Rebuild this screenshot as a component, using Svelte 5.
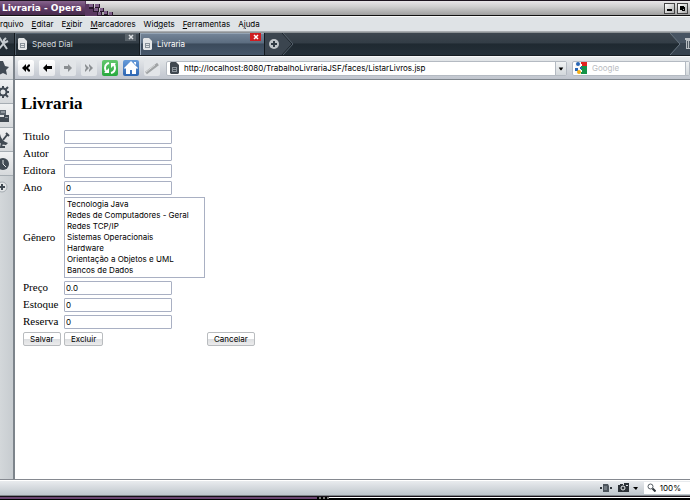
<script lang="ts">
    const menus = [
        ["", "", "rquivo"],
        ["", "E", "ditar"],
        ["E", "x", "ibir"],
        ["", "M", "arcadores"],
        ["Wid", "g", "ets"],
        ["", "F", "erramentas"],
        ["A", "j", "uda"],
    ];

    const genres = [
        "Tecnologia Java",
        "Redes de Computadores - Geral",
        "Redes TCP/IP",
        "Sistemas Operacionais",
        "Hardware",
        "Orientação a Objetos e UML",
        "Bancos de Dados",
    ];

    let url = $state("http://localhost:8080/TrabalhoLivrariaJSF/faces/ListarLivros.jsp");
    let search = $state("");
    let active = $state(1);
    let tabs = $state(["Speed Dial", "Livraria"]);

    let book = $state({
        titulo: "",
        autor: "",
        editora: "",
        ano: "0",
        genero: [] as string[],
        preco: "0.0",
        estoque: "0",
        reserva: "0",
    });
</script>

{#snippet page()}
    <svg class="page-icon" viewBox="0 0 9 12" aria-hidden="true">
        <path class="sheet" d="M1 0h5l3 3v8l-1 1H1l-1-1V1z" />
        <path class="ink" d="M2 5h5v5H2z" />
        <path class="hole" d="M3 6h3v1H3zM3 8h3v1H3z" />
    </svg>
{/snippet}

{#snippet field(id: string, label: string, key: "titulo" | "autor" | "editora" | "ano" | "preco" | "estoque" | "reserva")}
    <tr>
        <td><label for={id}>{label}</label></td>
        <td><input class="text" type="text" {id} bind:value={book[key]} /></td>
        <td></td>
    </tr>
{/snippet}

<div class="window">
    <header class="title-bar">
        <div class="title">Livraria - Opera</div>
        <svg class="pixels" viewBox="0 0 28 15" aria-hidden="true">
            <path fill="#5a3760" d="M0 0h1v3h3v4h4v4h4v4H0z" />
            <path fill="#29182d" d="M4 3h5v5H4zM10 3h5v4h-5zM8 7h6v4H8zM15 7h4v4h-4zM12 11h5v4h-5zM19 10h4v4h-4zM24 11h4v4h-4z" />
            <path fill="#80608a" d="M4 3h4v3H4zM10 3h4v3h-4zM9 7h4v3H9zM15 7h3v3h-3zM13 11h3v3h-3zM19 10h3v3h-3zM24 11h3v3h-3z" />
        </svg>
        <div class="window-buttons">
            <button aria-label="Minimizar">
                <svg viewBox="0 0 9 9"><path d="M2 5h5v2H2z" /></svg>
            </button>
            <button aria-label="Restaurar">
                <svg viewBox="0 0 9 9"><path d="M2 2h4v1h1v4H4V6H2z" /><path fill="#aaa" d="M5 5h1v1H5z" /></svg>
            </button>
            <button aria-label="Fechar">
                <svg viewBox="0 0 9 9"><path d="M2 2l5 5M7 2L2 7" stroke="#000" /></svg>
            </button>
        </div>
    </header>

    <nav class="menu">
        {#each menus as [before, key, after]}
            <button>{before}<u>{key}</u>{after}</button>
        {/each}
    </nav>

    <div class="tab-bar">
        <button class="panel-toggle" aria-label="Painéis">
            <svg viewBox="0 0 14 22">
                <path d="M-1 4L7 16M4 10L-2 17" stroke="#c5cbd0" stroke-width="2" fill="none" />
                <path d="M4 10V7l2-2M4 10l4-2" stroke="#c5cbd0" stroke-width="2" fill="none" />
            </svg>
        </button>
        {#each tabs as tab, i}
            <div class="tab" class:active={active === i}>
                <button class="tab-label" onclick={() => (active = i)}>{@render page()}{tab}</button>
                <button class="tab-close" aria-label="Fechar aba">
                    <svg viewBox="0 0 11 8"><path d="M4 2l4 4M8 2L4 6" stroke="currentColor" stroke-width="1.5" /></svg>
                </button>
            </div>
        {/each}
        <button class="new-tab" aria-label="Nova aba">
            <svg viewBox="0 0 28 22">
                <path d="M0 0h17l10 11-10 11H0z" fill="#3b454f" />
                <path d="M17 0l10 11-10 11" stroke="#1a2229" fill="none" />
                <path d="M18 0l10 11-10 11" stroke="#55616c" fill="none" />
                <circle cx="9" cy="11" r="5" fill="#c0c5c9" />
                <path d="M9 8v6M6 11h6" stroke="#303a43" stroke-width="2" />
            </svg>
        </button>
        <button class="trash" aria-label="Abas fechadas">
            <svg viewBox="0 0 20 22">
                <path d="M0 0h20v22H0l10-11z" fill="#37434f" />
                <path d="M0 0h20v10H9z" fill="#475462" />
                <path d="M0 0l10 11L0 22" stroke="#697682" fill="none" />
                <path d="M15 5h5v2h-5zM16 7h4v9h-4z" fill="#b9bfc4" />
                <path d="M17.500 8v7M19.500 8v7" stroke="#4e5963" />
            </svg>
        </button>
    </div>

    <div class="body">
        <aside class="panels">
            <button aria-label="Favoritos">
                <svg viewBox="-1 0 14 24">
                    <path d="M2 5l2 5 4 1-3 3 1 5-4-2-4 2V5z" fill="#414a53" />
                </svg>
            </button>
            <button aria-label="Widgets">
                <svg viewBox="-1 0 14 24">
                    <circle cx="2" cy="12" r="3.500" fill="none" stroke="#414a53" stroke-width="2" />
                    <path d="M2 6v3M2 15v3M5 12h3M4 10l3-3M4 14l3 3M0 10l-3-3M0 14l-3 3" stroke="#414a53" stroke-width="2" />
                </svg>
            </button>
            <button aria-label="Unite">
                <svg viewBox="-1 0 14 24">
                    <path d="M-1 6h6v5h-6z" fill="#5b646d" />
                    <path d="M0 7h4v2H0z" fill="#8d959c" />
                    <path d="M3 11h5v7H-1v-5h4z" fill="#414a53" />
                    <path d="M4 13h3v1H4z" fill="#8d959c" />
                </svg>
            </button>
            <button aria-label="Transferências">
                <svg viewBox="-1 0 14 24">
                    <path d="M-1 6q1 7 8 9l-2 2q-6 0-8-5z" fill="#414a53" />
                    <path d="M2 12l4-5M5 5l3 3M1 15l-1 4h4" stroke="#414a53" stroke-width="2" fill="none" />
                </svg>
            </button>
            <button aria-label="Histórico">
                <svg viewBox="-1 0 14 24">
                    <circle cx="2" cy="12" r="6" fill="#414a53" />
                    <path d="M2 8v4l3 3" stroke="#e4e7e9" stroke-width="1" fill="none" />
                </svg>
            </button>
            <button class="add" aria-label="Adicionar painel">
                <svg viewBox="-1 0 14 24">
                    <circle cx="1" cy="11" r="5" fill="#e3e6e8" stroke="#a4abb1" />
                    <path d="M1 8v6M-2 11h6" stroke="#414a53" stroke-width="2" />
                </svg>
            </button>
        </aside>

        <div class="main">
            <div class="toolbar">
                <button aria-label="Rebobinar">
                    <svg viewBox="0 0 16 16"><path d="M8 4v3l3-3v2L9 8l2 2v2L8 9v3L4 8zM12 4v2l-2 2 2 2v2L8 8z" /></svg>
                </button>
                <button aria-label="Voltar">
                    <svg viewBox="0 0 16 16"><path d="M8 4v2h5v3H8v3L4 8z" /></svg>
                </button>
                <button aria-label="Avançar" disabled>
                    <svg viewBox="0 0 16 16"><path d="M8 4v2H4v3h4v3l4-4z" /></svg>
                </button>
                <button aria-label="Avanço rápido" disabled>
                    <svg viewBox="0 0 16 16"><path d="M4 4l4 4-4 4v-2l1-2-1-2zM8 4l4 4-4 4v-2l1-2-1-2z" /></svg>
                </button>
                <button class="reload" aria-label="Recarregar">
                    <svg viewBox="0 0 16 16">
                        <path d="M7 3Q3 4 3 8q0 3 2 4M9 13q4-1 4-5 0-3-2-4" stroke="#fff" stroke-width="2" fill="none" />
                        <path d="M2 13h5V8zM14 3H9v5z" fill="#fff" />
                    </svg>
                </button>
                <button class="home" aria-label="Início">
                    <svg viewBox="0 0 16 16">
                        <path d="M8 1l7 7-1 1-1-1v6H9v-4H7v4H3V8L2 9 1 8z" fill="#fff" />
                        <path d="M11 2h2v3l-2-2z" fill="#fff" />
                    </svg>
                </button>
                <button class="wand" aria-label="Varinha">
                    <svg viewBox="0 0 16 16"><path d="M2 13L14 4" stroke="#a1a4a6" stroke-width="3" /><path d="M2 12L11 5" stroke="#d9dbdc" /></svg>
                </button>
                <div class="address">
                    {@render page()}
                    <input type="text" aria-label="Endereço" bind:value={url} />
                    <button class="drop" aria-label="Histórico de endereços">
                        <svg viewBox="0 0 11 15"><path d="M3 6h5L6 9H5z" /></svg>
                    </button>
                </div>
                <div class="search">
                    <svg class="google" viewBox="0 0 12 12" aria-hidden="true">
                        <path fill="#f7f8f8" d="M0 0h12v12H0z" />
                        <path fill="#e32320" d="M6 0h6v4H6z" />
                        <path fill="#159448" d="M6 4h6v8H6z" />
                        <path fill="#fff" d="M5 2h2v2H5zM5 8h2v2H5z" />
                        <circle cx="3" cy="2" r="2" fill="#2865b4" />
                        <path fill="#2865b4" d="M0 6h3v3H0zM5 5h2v2H5z" />
                        <circle cx="4" cy="10" r="2" fill="#f4ad15" />
                    </svg>
                    <input type="text" aria-label="Pesquisar" placeholder="Google" bind:value={search} />
                    <button class="drop" aria-label="Motores de busca"></button>
                </div>
            </div>

            <main>
                <h1>Livraria</h1>
                <form onsubmit={(e) => e.preventDefault()}>
                    <table>
                        <tbody>
                            {@render field("titulo", "Titulo", "titulo")}
                            {@render field("autor", "Autor", "autor")}
                            {@render field("editora", "Editora", "editora")}
                            {@render field("ano", "Ano", "ano")}
                            <tr>
                                <td><label for="genero">Gênero</label></td>
                                <td>
                                    <select id="genero" multiple size="7" bind:value={book.genero}>
                                        {#each genres as genre}
                                            <option>{genre}</option>
                                        {/each}
                                    </select>
                                </td>
                                <td></td>
                            </tr>
                            {@render field("preco", "Preço", "preco")}
                            {@render field("estoque", "Estoque", "estoque")}
                            {@render field("reserva", "Reserva", "reserva")}
                            <tr>
                                <td><button class="push">Salvar</button></td>
                                <td><button class="push">Excluir</button></td>
                                <td><button class="push">Cancelar</button></td>
                            </tr>
                        </tbody>
                    </table>
                </form>
            </main>
        </div>
    </div>

    <footer class="status">
        <button aria-label="Ajustar à largura">
            <svg width="12" height="10" viewBox="0 0 12 10">
                <path d="M3 1h5l1 2v6H3z" fill="#4c545c" />
                <path d="M0 4h2v2H0zM10 4h2v2h-2z" fill="#30363c" />
                <path d="M4 4h3M4 6h3" stroke="#99a1a8" />
            </svg>
        </button>
        <button aria-label="Imagens">
            <svg width="20" height="10" viewBox="0 0 20 10">
                <path d="M0 2h2V1h3v1h1V0h5v9H0z" fill="#2c3137" />
                <circle cx="5" cy="5" r="2" fill="none" stroke="#e8eaec" />
                <path d="M8 2h2v1H8z" fill="#dfe2e5" />
                <path d="M15 4h5l-2 3z" />
            </svg>
        </button>
        <button class="zoom">
            <svg width="9" height="9" viewBox="0 0 9 9">
                <circle cx="3.500" cy="3.500" r="2.500" fill="none" stroke="#555d64" />
                <path d="M5.500 5.500l3 3" stroke="#30363c" stroke-width="2" />
            </svg>
            100%
        </button>
    </footer>
    <div class="frame"><span></span><i></i></div>
</div>

<style>
    :global(body) {
        margin: 0;
    }

    .window {
        display: flex;
        flex-direction: column;
        min-height: 100vh;
        overflow: hidden;
        font: 8px/10px Inter, "Liberation Sans", sans-serif;
        color: #000;
    }

    button,
    input,
    select {
        margin: 0;
        padding: 0;
        border: 0;
        border-radius: 0;
        box-sizing: border-box;
        background: none;
        font: inherit;
        color: inherit;
        outline: none;
    }

    svg {
        display: block;
    }

    .title-bar {
        display: flex;
        height: 16px;
        box-sizing: border-box;
        border-top: 1px solid #1c141e;
        border-bottom: 1px solid #111;
        background: linear-gradient(#e8e6e8, #cfcfcf 40%, #9f9f9f);
    }

    .title {
        padding: 0 3px 0 2px;
        background: linear-gradient(#87648d, #5f3b66 50%, #472a4c);
        color: #fff;
        font: bold 9px/14px "DejaVu Sans", sans-serif;
        white-space: nowrap;
    }

    .pixels {
        width: 28px;
        height: 15px;
    }

    .window-buttons {
        display: flex;
        gap: 2px;
        margin: 2px -11px 0 auto;
    }

    .window-buttons button {
        width: 11px;
        height: 11px;
        border: 1px solid #444;
        background: linear-gradient(135deg, #fff, #aaa);
    }

    .menu {
        display: flex;
        gap: 8px;
        height: 16px;
        box-sizing: border-box;
        border-top: 1px solid #f9fafa;
        border-bottom: 1px solid #a9adb1;
        background: #dfe3e6;
    }

    .tab-bar {
        display: flex;
        height: 24px;
        box-sizing: border-box;
        border-top: 1px solid #8d9296;
        border-bottom: 1px solid #151c22;
        background: linear-gradient(#3d464f, #333d46 45%, #1f2931 50%, #242f38);
    }

    .panel-toggle {
        flex: none;
        width: 15px;
        border-right: 1px solid #12181d;
    }

    .tab {
        position: relative;
        flex: 0 1 125px;
        box-sizing: border-box;
        border-right: 1px solid #131a20;
        box-shadow: inset 1px 1px #53606c;
        color: #d5dade;
    }

    .tab.active {
        background: linear-gradient(#75869a, #5c6d80 45%, #3b4a5b 50%, #46576a);
        box-shadow: inset 1px 1px #94a4b5;
        color: #fff;
    }

    .tab-label {
        display: flex;
        align-items: center;
        gap: 5px;
        width: 100%;
        height: 100%;
        padding-left: 3px;
    }

    .page-icon {
        flex: none;
        width: 9px;
        height: 12px;
    }

    .sheet {
        fill: #e3e5e7;
    }

    .ink {
        fill: #89929a;
    }

    .hole {
        fill: #e3e5e7;
    }

    .tab-close {
        position: absolute;
        top: 0;
        right: 3px;
        width: 11px;
        height: 8px;
        background: #59626a;
        color: #dde0e3;
    }

    .active .tab-close {
        background: #cf1c20;
        color: #fff;
    }

    .tab-close svg {
        width: 11px;
        height: 8px;
    }

    .new-tab {
        width: 28px;
    }

    .trash {
        width: 20px;
        margin-left: auto;
    }

    .body {
        display: flex;
        flex: 1;
    }

    .panels {
        width: 13px;
        flex: none;
        border-right: 2px solid #7d848b;
        background: linear-gradient(90deg, #d3d7da, #c7ccd0);
    }

    .panels button {
        display: block;
        width: 13px;
        height: 24px;
        border-bottom: 1px solid #a6adb3;
        background: linear-gradient(#f1f2f3, #d6d9dc);
        overflow: hidden;
    }

    .panels .add {
        border: 0;
        background: none;
    }

    .panels svg {
        width: 14px;
        height: 24px;
    }

    .main {
        display: flex;
        flex: 1;
        flex-direction: column;
        min-width: 0;
        background: #fff;
    }

    .toolbar {
        display: flex;
        align-items: center;
        gap: 5px;
        height: 24px;
        box-sizing: border-box;
        padding-left: 3px;
        border-top: 1px solid #f8f9fa;
        border-bottom: 1px solid #7f868d;
        background: linear-gradient(#e7eaec, #c0c5ce);
    }

    .toolbar > button {
        flex: none;
        width: 16px;
        height: 16px;
        border-radius: 2px;
        background: linear-gradient(#fff, #e6e8eb);
    }

    .toolbar > button:disabled {
        background: #e2e5e8;
        fill: #8b8f92;
    }

    .toolbar > .reload {
        background: linear-gradient(#63c76e, #27a93d);
    }

    .toolbar > .home {
        background: linear-gradient(#679bd9, #2c65b2);
    }

    .toolbar > .wand {
        background: #e2e5e8;
    }

    .address,
    .search {
        display: flex;
        align-items: center;
        gap: 5px;
        height: 15px;
        box-sizing: border-box;
        border: 1px solid #b4bac2;
        border-radius: 2px;
        background: #fff;
    }

    .address {
        flex: 1;
        padding-left: 3px;
        margin-left: 1px;
    }

    .search {
        width: 118px;
        padding-left: 2px;
    }

    .address .sheet {
        fill: #404850;
    }

    .address .ink {
        fill: #8c949b;
    }

    .address .hole {
        fill: #404850;
    }

    .address input,
    .search input {
        flex: 1;
        min-width: 0;
        height: 13px;
    }

    .search input::placeholder {
        color: #b9bcbf;
        opacity: 1;
    }

    .google {
        flex: none;
        width: 12px;
        height: 12px;
    }

    .drop {
        flex: none;
        width: 11px;
        height: 13px;
        border-left: 1px solid #b4bac2;
        background: linear-gradient(#f1f3f4, #d3d8dc);
    }

    .search .drop {
        width: 4px;
    }

    main {
        padding: 14px 6px;
        font: 11px/15px "Liberation Serif", serif;
    }

    h1 {
        margin: 0 0 13px;
        font-size: 17px;
        line-height: 20px;
    }

    table {
        border-spacing: 2px;
    }

    td {
        height: 15px;
        padding: 0;
        vertical-align: middle;
    }

    td:first-child {
        min-width: 39px;
    }

    label {
        display: block;
    }

    .text {
        display: block;
        width: 108px;
        height: 14px;
        padding: 0 1px;
        border: 1px solid #a9b0c3;
        border-radius: 1px;
        background: #fff;
        font: 8px/10px Inter, "Liberation Sans", sans-serif;
    }

    select {
        display: block;
        width: 141px;
        height: 81px;
        padding: 1px 0;
        border: 1px solid #a9b0c3;
        font: 8px/10px Inter, "Liberation Sans", sans-serif;
        overflow: hidden;
    }

    option {
        min-height: 11px;
        padding: 0 2px;
        line-height: 11px;
    }

    .push {
        display: block;
        height: 14px;
        padding: 0 6px;
        border: 1px solid #b9bcbf;
        border-radius: 2px;
        background: linear-gradient(#fff 50%, #dcdee0 50%, #ececed);
        font: 8px/10px Inter, "Liberation Sans", sans-serif;
    }

    .status {
        display: flex;
        align-items: center;
        justify-content: flex-end;
        gap: 6px;
        height: 17px;
        box-sizing: border-box;
        border-top: 1px solid #858990;
        border-bottom: 1px solid #81868b;
        box-shadow: inset 0 1px #fff;
        background: linear-gradient(#eceef1, #bfc6cc);
    }

    .status .zoom {
        display: flex;
        align-items: center;
        gap: 4px;
        height: 12px;
        padding: 0 9px 0 3px;
        background: #fff;
    }

    .frame {
        display: flex;
        height: 4px;
        box-sizing: border-box;
        border-top: 1px solid #161018;
        border-bottom: 1px solid #000;
        background: linear-gradient(#fff 50%, #000 50%);
    }

    .frame span {
        width: 46%;
        background: #6b4571;
    }

    .frame i {
        width: 12px;
        background: repeating-linear-gradient(90deg, #000 0 2px, #777 2px 4px);
    }
</style>
